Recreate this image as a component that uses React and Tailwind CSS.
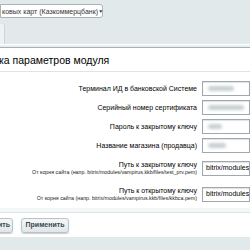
import React from "react";

const rows = [
  { label: "Терминал ИД в банковской Системе", blur: "w-[26px]" },
  { label: "Серийный номер сертификата", blur: "w-[36px]" },
  { label: "Пароль к закрытому ключу", blur: "w-[14px]" },
  { label: "Название магазина (продавца)", blur: "w-[18px]" },
];

function Blur({ w }) {
  return <div className={`ml-[5px] h-[5px] ${w} rounded-full bg-[#c9cfd2] blur-[1.5px]`} />;
}

export default function App() {
  return (
    <div
      className="w-[250px] h-[250px] overflow-hidden bg-[#e1e9eb] flex flex-col text-black"
      style={{ fontFamily: '"Liberation Sans", Arial, sans-serif' }}
    >
      {/* top bar */}
      <div className="h-[44px] flex flex-col">
        <div className="mt-[4px] w-[103px] h-[14px] bg-white border border-[#aab3b7] rounded-r-[3px] flex items-center justify-between pr-[3px] text-[7px] leading-none text-[#333]">
          <span className="whitespace-nowrap pl-[1px]">ковых карт (Казкоммерцбанк)</span>
          <span className="text-[5px]">▼</span>
        </div>
        <div className="mt-[6px] w-[5px] h-[20px] bg-[#edf2f3] border-r border-[#cdd5d8] rounded-tr-[2px]" />
      </div>
      {/* panel */}
      <div className="border-t border-white">
        <div className="h-[2px] bg-[#eaf0f1]" />
        <div className="border-t border-[#a7b0b3] bg-white">
          <div className="h-[23px] flex items-center text-[10.5px] leading-none pt-[2px]">
            <span className="whitespace-nowrap -ml-[1px]">ка параметров модуля</span>
          </div>
          <div className="border-t border-[#dfe5e7]" />
          <div className="pt-[9px] flex flex-col gap-[4px]">
            {rows.map((r) => (
              <div key={r.label} className="flex items-center h-[15px]">
                <div className="w-[197px] text-right text-[7px] leading-none whitespace-nowrap">{r.label}</div>
                <div className="ml-[5px] flex-1 h-[15px] border border-[#9fa9ad] bg-white flex items-center shadow-[inset_0_1px_1px_rgba(0,0,0,0.12)]">
                  <Blur w={r.blur} />
                </div>
              </div>
            ))}
            <div className="flex items-center h-[22px]">
              <div className="w-[197px] text-right leading-none whitespace-nowrap">
                <div className="text-[7px]">Путь к закрытому ключу</div>
                <div className="text-[5.3px] mt-[2px] text-[#222]">От корня сайта (напр. bitrix/modules/vampirus.kkb/files/test_prv.pem)</div>
              </div>
              <div className="ml-[5px] w-[48px] h-[15px] border border-[#9fa9ad] bg-white flex items-center text-[7px] pl-[3px] whitespace-nowrap overflow-hidden shadow-[inset_0_1px_1px_rgba(0,0,0,0.12)]">
                bitrix/modules/v
              </div>
            </div>
            <div className="flex items-center h-[22px]">
              <div className="w-[197px] text-right leading-none whitespace-nowrap">
                <div className="text-[7px]">Путь к открытому ключу</div>
                <div className="text-[5.3px] mt-[2px] text-[#222]">От корня сайта (напр. bitrix/modules/vampirus.kkb/files/kkbca.pem)</div>
              </div>
              <div className="ml-[5px] w-[48px] h-[15px] border border-[#9fa9ad] bg-white flex items-center text-[7px] pl-[3px] whitespace-nowrap overflow-hidden shadow-[inset_0_1px_1px_rgba(0,0,0,0.12)]">
                bitrix/modules/v
              </div>
            </div>
          </div>
          <div className="mt-[3px] h-[5px] bg-[#f3f7f8] border-b border-[#dde4e6]" />
          <div className="h-[24px] flex items-center gap-[8px] bg-white">
            <div className="h-[15px] w-[14px] -ml-[1px] rounded-r-[3px] border border-[#b9c3c6] bg-gradient-to-b from-[#f4f7f8] to-[#dfe6e9] shadow-[0_1px_1px_rgba(0,0,0,0.2)] flex items-center justify-end pr-[2px] text-[7px] font-bold text-[#3a474f] whitespace-nowrap">
              ить
            </div>
            <div className="h-[15px] w-[48px] rounded-[3px] border border-[#b9c3c6] bg-gradient-to-b from-[#f4f7f8] to-[#dfe6e9] shadow-[0_1px_1px_rgba(0,0,0,0.2)] flex items-center justify-center text-[7px] font-bold text-[#3a474f]">
              Применить
            </div>
          </div>
        </div>
      </div>
      <div className="flex-1 bg-[#e1e9eb]" />
    </div>
  );
}
